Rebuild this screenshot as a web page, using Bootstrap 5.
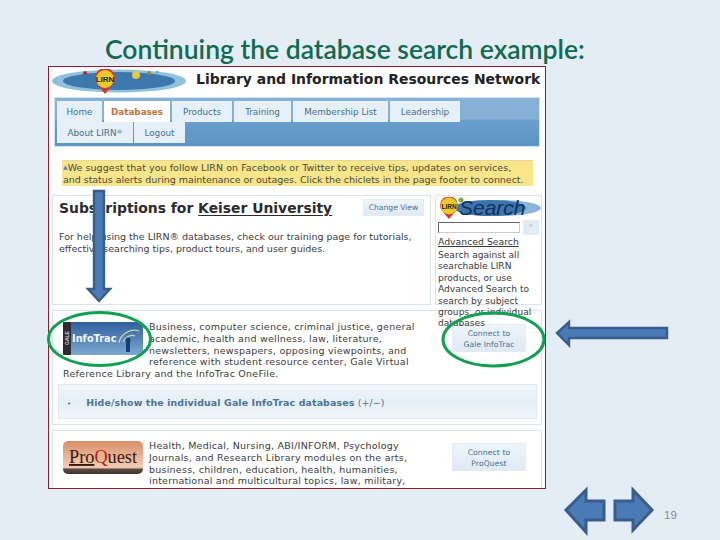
<!DOCTYPE html>
<html lang="en">
<head>
  <meta charset="UTF-8" />
  <meta name="viewport" content="width=device-width, initial-scale=1.0"/>
  <title>Continuing the database search example</title>
  <link href="https://cdn.jsdelivr.net/npm/bootstrap@5.3.2/dist/css/bootstrap.min.css" rel="stylesheet">
  <style>
    html, body { margin: 0; background: #e4ecf6; }
    .slide { width: 720px; height: 540px; overflow: hidden; background: #e4ecf6; }
    .slide-title { font: 600 26.5px/30px Lato, sans-serif; color: #0f6b50; margin: 0; padding: 34px 0 0 105px; height: 66px; white-space: nowrap; }
    .shot { width: 498px; height: 423px; margin-left: 48px; background: #fff; border: 1px solid #8c1f2c; overflow: hidden; font: 9.5px/12.3px "DejaVu Sans", sans-serif; color: #3c3c3c; padding: 2px 3px 0 3px; }
    .lirn-head { height: 26px; }
    .lirn-head h2 { font: 700 13.95px/20px "DejaVu Sans", sans-serif; color: #222; margin: 0 0 0 8px; white-space: nowrap; }
    .lirn-nav { margin: 2px 2px 0 2px; height: 50px; border: 1px solid #d5e2ee; padding: 3px 0 0 2px; background: linear-gradient(#86b1d6 0, #86b1d6 44%, #6a9fcd 46%, #5b94c5 100%); }
    .lirn-tab { height: 21px; line-height: 22px; text-align: center; background: #e6f0f8; color: #44708f; font-size: 8.8px; margin-right: 2px; white-space: nowrap; }
    .lirn-tab.on { background: #fbfdfe; color: #c4743a; font-weight: 700; }
    .lirn-tab sup { font-size: 6px; top: -2px; }
    .tab-a { width: 45px; } .tab-b { width: 66px; } .tab-c { width: 60px; } .tab-d { width: 57px; }
    .tab-e { width: 95px; } .tab-f { width: 70px; } .tab-g { width: 76px; margin-right: 1px; line-height: 23px; } .tab-h { width: 51px; line-height: 23px; }
    .notice { margin: 13px 9px 0 10px; height: 26px; background: #f9e58a; border-top: 1px solid #e8d98e; padding: 0 0 0 1px; color: #4a4a3a; white-space: nowrap; letter-spacing: .05px; line-height: 12.2px; }
    .notice i { color: #5f84b8; font-style: normal; font-size: 6px; vertical-align: 2px; }
    .notice span { letter-spacing: -.04px; }
    .panel-row { margin-top: 9px; }
    .panel-box { border: 1px solid #dbe4ec; background: #fff; }
    .subs { width: 379px; height: 110px; padding: 3px 6px; position: relative; }
    .subs h3 { font: 700 13.9px/18px "DejaVu Sans", sans-serif; color: #2c2c2c; margin: 0; white-space: nowrap; }
    .subs h3 u { text-underline-offset: 2px; }
    .soft-btn { background: linear-gradient(#eef5fb, #dfeaf5); border: 1px solid #e3ecf4; color: #47708f; font-size: 7.6px; line-height: 11px; text-align: center; letter-spacing: .12px; }
    .change-btn { width: 61px; height: 17px; line-height: 15px; flex: none; letter-spacing: 0; }
    .subs p { margin: 14px 0 0 0; white-space: nowrap; }
    .search-col { width: 107px; height: 110px; padding: 0 2px; font-size: 9.1px; line-height: 11.4px; position: relative; z-index: 2; white-space: nowrap; background: transparent; }
    .search-logo { display: block; margin: 1px 0 0 0; }
    .search-row { margin-top: 3px; height: 12px; }
    .search-input { width: 84px; height: 11px; border: 1px solid #666; border-right-color: #ccc; border-bottom-color: #ccc; }
    .search-go { width: 16px; height: 15px; margin-top: -2px; margin-left: 3px; background: #e2ecf6; color: #8aa; text-align: center; font-size: 7px; }
    .adv { font-size: 9.3px; color: #3a3a3a; line-height: 13px; margin-top: 1px; text-decoration: underline; }
    .search-text { margin-top: 2px; }
    .gale { height: 115px; margin-top: 5px; padding: 10px 10px 0 10px; position: relative; line-height: 11.8px; }
    .gale p, .quest p { margin: 0; letter-spacing: .24px; white-space: nowrap; }
    .logo-float { float: left; margin: 1px 6px 4px 0; }
    .connect-btn { width: 74px; height: 28px; padding-top: 3px; flex: none; }
    .gale-btn { position: absolute; top: 13px; right: 15px; }
    .quest-btn { margin-top: 3px; }
    .toggle { margin: 4px -6px 0 -5px; height: 35px; background: linear-gradient(#f0f6fb, #e6eff7 50%, #eef5fa); border: 1px solid #dfe9f1; color: #4b7394; font-weight: 700; font-size: 9.4px; line-height: 35px; padding-left: 8px; letter-spacing: .14px; white-space: nowrap; }
    .toggle span { font-weight: 400; }
    .toggle b { font-weight: 400; margin-right: 15px; font-size: 7px; }
    .quest { height: 80px; margin-top: 5px; padding: 9px 15px 0 10px; line-height: 11.8px; }
    .overlay { position: absolute; left: 0; top: 0; pointer-events: none; z-index: 3; }
    .page-no { position: absolute; left: 664px; top: 507px; font: 11.5px/16px "Liberation Sans", sans-serif; color: #8b8b8b; }
  </style>
</head>
<body>
  <div class="slide position-relative">
    <h1 class="slide-title">Continuing the database search example:</h1>

    <div class="shot">
      <div class="lirn-head d-flex align-items-start">
        <svg width="136" height="25" viewBox="0 0 136 25">
          <ellipse cx="67" cy="12" rx="67" ry="11.5" fill="#8fc0dc"/>
          <ellipse cx="67" cy="12" rx="56" ry="9" fill="#3c78ac"/>
          <circle cx="33" cy="4" r="2" fill="#c8232c"/>
          <circle cx="84" cy="6" r="4" fill="#e8c840"/>
          <circle cx="97" cy="4" r="2" fill="#c07830"/>
          <circle cx="105" cy="3" r="1.2" fill="#50c060"/>
          <path d="M53 25 L45 15 A10 10 0 1 1 61 15 Z" fill="#d8352c"/>
          <circle cx="53" cy="10" r="9" fill="#f0c828"/>
          <text x="53" y="13" font-family="Liberation Sans" font-size="8" font-weight="700" text-anchor="middle" fill="#222">LIRN</text>
        </svg>
        <h2>Library and Information Resources Network</h2>
      </div>

      <div class="lirn-nav">
        <div class="d-flex">
          <div class="lirn-tab tab-a">Home</div>
          <div class="lirn-tab on tab-b">Databases</div>
          <div class="lirn-tab tab-c">Products</div>
          <div class="lirn-tab tab-d">Training</div>
          <div class="lirn-tab tab-e">Membership List</div>
          <div class="lirn-tab tab-f">Leadership</div>
        </div>
        <div class="d-flex mt-0">
          <div class="lirn-tab tab-g">About LIRN<sup>®</sup></div>
          <div class="lirn-tab tab-h">Logout</div>
        </div>
      </div>

      <div class="notice"><i>▲</i>We suggest that you follow LIRN on Facebook or Twitter to receive tips, updates on services,<br><span>and status alerts during maintenance or outages. Click the chiclets in the page footer to connect.</span></div>

      <div class="d-flex gap-1 panel-row">
        <div class="panel-box subs">
          <div class="d-flex justify-content-between">
            <h3>Subscriptions for <u>Keiser University</u></h3>
            <div class="soft-btn change-btn">Change View</div>
          </div>
          <p>For help using the LIRN® databases, check our training page for tutorials,<br>effective searching tips, product tours, and user guides.</p>
        </div>
        <div class="panel-box search-col">
          <svg class="search-logo" width="103" height="22" viewBox="0 0 103 22">
            <ellipse cx="60" cy="11" rx="43" ry="8" fill="#8cb4d8"/>
            <ellipse cx="52" cy="11" rx="36" ry="8" fill="#3d74ab"/>
            <path d="M11 22 L4 14 A9 9 0 1 1 18 14 Z" fill="#d8352c"/>
            <circle cx="11" cy="9" r="8.5" fill="#f0c828"/>
            <text x="11" y="11.5" font-family="Liberation Sans" font-size="6.5" font-weight="700" text-anchor="middle" fill="#222">LIRN</text>
            <circle cx="23" cy="3" r="2.5" fill="#6fae3a"/>
            <text x="21" y="18" font-family="Liberation Sans" font-style="italic" font-size="21" fill="#12305c">Search</text>
          </svg>
          <div class="search-row d-flex align-items-start">
            <div class="search-input"></div>
            <div class="search-go">⌕</div>
          </div>
          <div class="adv">Advanced Search</div>
          <div class="search-text">Search against all<br>searchable LIRN<br>products, or use<br>Advanced Search to<br>search by subject<br>groups, or individual<br>databases</div>
        </div>
      </div>

      <div class="panel-box gale">
        <svg class="logo-float" width="80" height="34" viewBox="0 0 80 34">
          <defs>
            <linearGradient id="infoBg" x1="0" y1="0" x2="0" y2="1">
              <stop offset="0" stop-color="#2f5f9c"/>
              <stop offset="1" stop-color="#7ea8d2"/>
            </linearGradient>
          </defs>
          <rect x="0" y="0" width="80" height="33" rx="2" fill="url(#infoBg)"/>
          <rect x="0" y="0" width="8" height="33" rx="1" fill="#2c2c30"/>
          <text x="0" y="0" transform="translate(6 23) rotate(-90)" font-family="Liberation Sans" font-size="5" font-weight="700" fill="#ccc">GALE</text>
          <text x="9" y="20" font-family="DejaVu Sans" font-size="9.8" font-weight="700" fill="#f2f6fb">InfoTrac</text>
          <path d="M56 21 C57 12 68 6 76 9 M60 20 C62 15 68 12 72 14" fill="none" stroke="#cfd7a8" stroke-width="1.2"/>
          <rect x="63" y="20" width="4" height="10" fill="#123f7a"/>
          <circle cx="65" cy="18" r="2.5" fill="#123f7a"/>
        </svg>
        <p>Business, computer science, criminal justice, general<br>academic, health and wellness, law, literature,<br>newsletters, newspapers, opposing viewpoints, and<br>reference with student resource center, Gale Virtual<br>Reference Library and the InfoTrac OneFile.</p>
        <div class="soft-btn connect-btn gale-btn">Connect to<br>Gale InfoTrac</div>
        <div class="toggle clearfix"><b>•</b>Hide/show the individual Gale InfoTrac databases <span>(+/−)</span></div>
      </div>

      <div class="panel-box quest d-flex justify-content-between">
        <div>
          <svg class="logo-float" width="80" height="34" viewBox="0 0 80 34">
            <defs>
              <linearGradient id="pqBg" x1="0" y1="0" x2="0" y2="1">
                <stop offset="0" stop-color="#d98f68"/>
                <stop offset=".8" stop-color="#f4cdb4"/>
                <stop offset=".86" stop-color="#5a4a40"/>
                <stop offset="1" stop-color="#3e3530"/>
              </linearGradient>
            </defs>
            <rect x="0" y="0" width="80" height="33" rx="5" fill="url(#pqBg)"/>
            <text x="6" y="22" font-family="Liberation Serif" font-size="19" fill="#3a1a10" textLength="68" lengthAdjust="spacingAndGlyphs"><tspan text-decoration="underline">Pro</tspan><tspan fill="#c01818">Q</tspan>uest</text>
          </svg>
          <p>Health, Medical, Nursing, ABI/INFORM, Psychology<br>Journals, and Research Library modules on the arts,<br>business, children, education, health, humanities,<br>international and multicultural topics, law, military,</p>
        </div>
        <div class="soft-btn connect-btn quest-btn">Connect to<br>ProQuest</div>
      </div>
    </div>

    <svg class="overlay" width="720" height="540" viewBox="0 0 720 540">
      <g fill="#4a7bb7" stroke="#385d8a" stroke-width="2.4">
        <path d="M94 191 H104 V289 H110 L99 301 L88 289 H94 Z"/>
        <path d="M667 328 V338 H569 V345 L557 333 L569 322 V328 Z"/>
      </g>
      <g fill="#4a7bb7" stroke="#385d8a" stroke-width="3">
        <path d="M604 501 V520 H586 V532 L566 510 L586 490 V501 Z"/>
        <path d="M615 501 V520 H633 V530 L652 510 L633 490 V501 Z"/>
      </g>
      <g fill="none" stroke="#10a050" stroke-width="3">
        <ellipse cx="99.5" cy="339" rx="51" ry="26.5"/>
        <ellipse cx="493.5" cy="339.5" rx="50.5" ry="26.5"/>
      </g>
    </svg>
    <div class="page-no">19</div>
  </div>

  <script src="https://cdn.jsdelivr.net/npm/bootstrap@5.3.2/dist/js/bootstrap.bundle.min.js"></script>
</body>
</html>
